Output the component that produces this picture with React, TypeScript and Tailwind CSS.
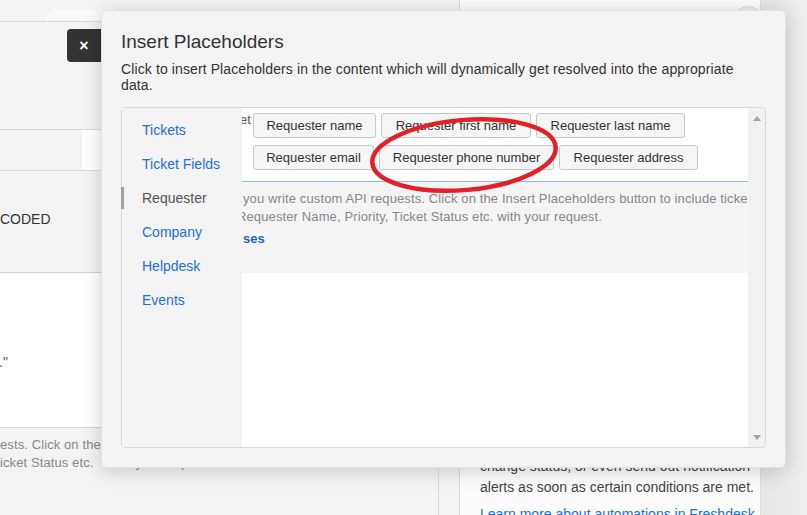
const navItems = [
  { label: "Tickets", active: false },
  { label: "Ticket Fields", active: false },
  { label: "Requester", active: true },
  { label: "Company", active: false },
  { label: "Helpdesk", active: false },
  { label: "Events", active: false },
];

const rowOne = [
  { label: "Requester name", width: "w-[123px]" },
  { label: "Requester first name", width: "w-[150px]" },
  { label: "Requester last name", width: "w-[149px]" },
];

const rowTwo = [
  { label: "Requester email", width: "w-[121px]" },
  { label: "Requester phone number", width: "w-[175px]" },
  { label: "Requester address", width: "w-[139px]" },
];

const PlaceholderButton = ({ label, width }: { label: string; width: string }) => (
  <button
    className={`${width} h-[25px] shrink-0 flex items-center justify-center whitespace-nowrap rounded-[3px] border border-[#c8c8c8] bg-[#f5f5f5] text-[13px] leading-[15px] text-[#333]`}
  >
    {label}
  </button>
);

const App: React.FC = () => {
  return (
    <div className="relative w-[807px] h-[515px] overflow-hidden bg-[#f3f3f3] font-['Liberation_Sans',Arial,sans-serif]">
      {/* page behind the dialog */}
      <div className="flex h-full">
        <div className="w-[438px] shrink-0 flex flex-col">
          <div className="h-[22px] border-b border-[#dcdcdc] flex items-end">
            <div className="ml-[46px] w-[70px] h-[12px] rounded-tl-[16px] bg-[#f9f9f9]" />
          </div>
          <div className="h-[108px] border-b border-[#d9d9d9] bg-[#f4f4f4]" />
          <div className="h-[41px] border-b border-[#d9d9d9] flex">
            <div className="w-[82px]" />
            <div className="flex-1 bg-white" />
          </div>
          <div className="h-[102px] border-b border-[#d4d4d4] pt-[40px] text-[14px] leading-[16px] text-[#333]">
            CODED
          </div>
          <div className="h-[155px] border-b border-[#d4d4d4] bg-white pt-[81px] text-[14px] leading-[16px] text-[#555]">
            <span className="-ml-[1px]">."</span>
          </div>
          <div className="pt-[8px] text-[13px] leading-[18px] tracking-[0.1px] text-[#888] whitespace-nowrap">
            <div>ests. Click on the Insert Placeholders button to include ticket</div>
            <div>icket Status etc.&nbsp;&nbsp;&nbsp; with your request.</div>
          </div>
        </div>
        <div className="w-[21px] shrink-0 flex flex-col">
          <div className="h-[300px]" />
          <div className="flex-1 border-l border-[#dcdcdc]" />
        </div>
        <div className="w-[302px] shrink-0 border-x border-[#dcdcdc] bg-[#fbfbfb] pt-[456px] pl-[20px] text-[14px] leading-[21px] text-[#444] whitespace-nowrap">
          <div>change status, or even send out notification</div>
          <div>alerts as soon as certain conditions are met.</div>
          <div className="mt-[6px] text-[#1f6fd6]">Learn more about automations in Freshdesk</div>
        </div>
        <div className="flex-1 bg-linear-to-r from-[#e6e6e6] to-[#eeeeee]" />
      </div>

      <div className="absolute left-[734px] top-[6px] size-[28px] rounded-full border border-[#d8d8d8] bg-[#eeeeee]" />

      {/* close tab */}
      <div className="absolute left-[67px] top-[29px] w-[34px] h-[33px] rounded-l-[4px] bg-[#333] flex items-center justify-center text-[16px] font-bold leading-none text-white">
        ×
      </div>

      {/* dialog */}
      <div className="absolute left-[101px] top-[10px] w-[685px] h-[458px] rounded-[5px] border border-[#e2e2e2] bg-[#f3f3f3] pt-[20px] px-[19px] shadow-[0_3px_20px_rgba(0,0,0,0.18)]">
        <h2 className="h-[22px] text-[19px] leading-[22px] text-[#333]">Insert Placeholders</h2>
        <p className="mt-[8px] w-[632px] text-[14px] leading-[16px] tracking-[0.11px] text-[#333]">
          Click to insert Placeholders in the content which will dynamically get resolved into the appropriate data.
        </p>

        <div className="mt-[14px] h-[341px] flex rounded-[4px] border border-[#d9d9d9]">
          <div className="w-[120px] shrink-0 bg-[#f3f3f3] pt-[5px]">
            {navItems.map((item) => (
              <div key={item.label} className="h-[34px] flex items-center text-[14px] leading-[16px]">
                <span className={`-ml-px w-[3px] h-[22px] ${item.active ? "bg-[#a0a0a0]" : ""}`} />
                <span className={`ml-[18px] ${item.active ? "text-[#555]" : "text-[#1f6fd6]"}`}>{item.label}</span>
              </div>
            ))}
          </div>

          <div className="w-[506px] shrink-0 flex flex-col overflow-hidden">
            <div className="h-[74px] shrink-0 bg-white border-b border-[#8cb8e6] pt-[4px] flex">
              <span className="-ml-[2px] mr-[2px] w-[11px] shrink-0 text-[13px] leading-[15px] text-[#555]">et</span>
              <div className="mt-[1px] flex flex-col gap-[7px]">
                <div className="flex gap-[5px]">
                  {rowOne.map((b) => (
                    <PlaceholderButton key={b.label} label={b.label} width={b.width} />
                  ))}
                </div>
                <div className="flex gap-[5px]">
                  {rowTwo.map((b) => (
                    <PlaceholderButton key={b.label} label={b.label} width={b.width} />
                  ))}
                </div>
              </div>
            </div>
            <div className="h-[91px] shrink-0 bg-[#f4f4f4] pt-[8px] text-[13px] leading-[18px] tracking-[0.12px] text-[#888] whitespace-nowrap">
              <div className="ml-[1px]">you write custom API requests. Click on the Insert Placeholders button to include ticket</div>
              <div className="-ml-[5px]">Requester Name, Priority, Ticket Status etc. with your request.</div>
              <div className="mt-[4px] ml-[1px] font-bold tracking-normal text-[#1a63c9]">ses</div>
            </div>
            <div className="flex-1 bg-white" />
          </div>

          <div className="w-[17px] shrink-0 bg-[#f1f1f1] flex flex-col items-center justify-between pt-[8px] pb-[7px] rounded-r-[4px]">
            <svg width="8" height="5" viewBox="0 0 8 5">
              <path d="M0 5 L4 0 L8 5 Z" fill="#a6a6a6" />
            </svg>
            <svg width="8" height="5" viewBox="0 0 8 5">
              <path d="M0 0 L8 0 L4 5 Z" fill="#a6a6a6" />
            </svg>
          </div>
        </div>
      </div>

      {/* red annotation */}
      <svg className="absolute left-[360px] top-[100px]" width="210" height="110" viewBox="0 0 210 110">
        <ellipse cx="104" cy="55" rx="92" ry="35" fill="none" stroke="#e41f27" strokeWidth="4.5" transform="rotate(-5 104 55)" />
      </svg>
    </div>
  );
};

export default App;
